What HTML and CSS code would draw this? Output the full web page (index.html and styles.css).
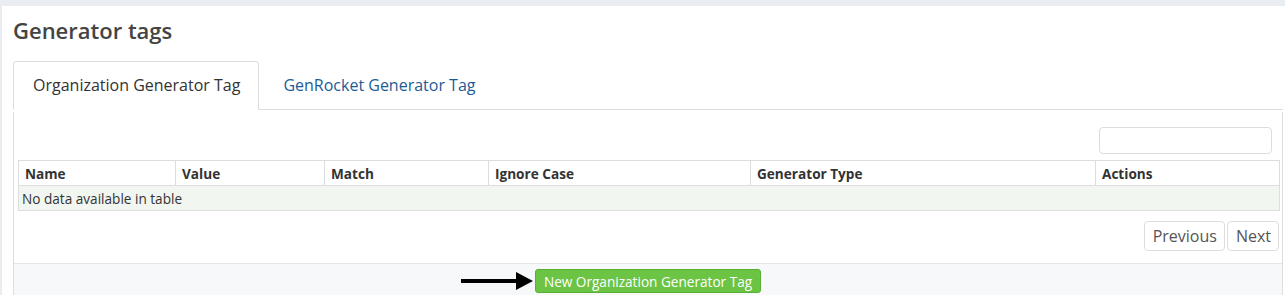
FILE: index.html
```html
<!DOCTYPE html>
<html lang="en">
<head>
    <meta charset="UTF-8">
    <title>Generator tags</title>
    <link rel="stylesheet" href="styles.css">
</head>
<body>

<div class="page">
    <h1 class="page-title">Generator tags</h1>

    <ul class="tabs">
        <li class="tab active">Organization Generator Tag</li>
        <li class="tab"><a href="#">GenRocket Generator Tag</a></li>
    </ul>

    <div class="tab-content">
        <div class="table-body">
            <div class="search-row">
                <input type="text" class="search-field">
            </div>
            <table class="data-table">
                <thead>
                <tr>
                    <th class="col-name">Name</th>
                    <th class="col-value">Value</th>
                    <th class="col-match">Match</th>
                    <th class="col-ignore">Ignore Case</th>
                    <th class="col-type">Generator Type</th>
                    <th>Actions</th>
                </tr>
                </thead>
                <tbody>
                <tr>
                    <td colspan="6">No data available in table</td>
                </tr>
                </tbody>
            </table>
            <div class="pager">
                <button class="pager-button">Previous</button>
                <button class="pager-button">Next</button>
            </div>
        </div>
        <div class="panel-footer">
            <span class="new-wrap">
                <span class="arrow"></span>
                <button class="new-button">New Organization Generator Tag</button>
            </span>
        </div>
    </div>
</div>

</body>
</html>
```

FILE: styles.css
```css
body {
    margin: 0;
    padding: 6px 0 0 2px;
    background: #e9ecf1;
    font-family: "Open Sans", "Liberation Sans", sans-serif;
    color: #333;
    height: 295px;
    box-sizing: border-box;
    overflow: hidden;
}
.page {
    background: #fff;
    padding: 12px 2px 0 11px;
    height: 289px;
    box-sizing: border-box;
}
.page-title {
    margin: 0;
    font-size: 22px;
    font-weight: 600;
    line-height: 24px;
    color: #444;
}
.tabs {
    display: flex;
    list-style: none;
    margin: 19px 0 0 0;
    padding: 0;
    border-bottom: 1px solid #ddd;
}
.tab {
    padding: 0 18px 0 19px;
    height: 47px;
    line-height: 47px;
    font-size: 16px;
    margin-bottom: -1px;
    border: 1px solid transparent;
    border-radius: 4px 4px 0 0;
}
.tab.active {
    background: #fff;
    border-color: #ddd;
    border-bottom-color: #fff;
}
.tab a {
    color: #1d5b96;
    text-decoration: none;
    padding-left: 4px;
}
.tab-content {
    margin-top: 2px;
    border-left: 1px solid #ddd;
    border-right: 1px solid #ddd;
}
.table-body {
    padding: 15px 2px 12px 4px;
}
.search-row {
    display: flex;
    justify-content: flex-end;
    margin-bottom: 6px;
}
.search-field {
    width: 173px;
    height: 27px;
    box-sizing: border-box;
    border: 1px solid #ddd;
    border-radius: 4px;
    margin-right: 8px;
}
.data-table {
    width: 100%;
    border-collapse: collapse;
    font-size: 13.6px;
}
.data-table th, .data-table td {
    border: 1px solid #ddd;
    text-align: left;
    padding: 0 6px;
    height: 25px;
    box-sizing: border-box;
}
.data-table th {
    font-weight: 700;
    color: #333;
}
.data-table td {
    background: #f2f6f1;
    padding-left: 3px;
}
.col-name { width: 157px; }
.col-value { width: 149px; }
.col-match { width: 164px; }
.col-ignore { width: 262px; }
.col-type { width: 345px; }
.pager {
    display: flex;
    justify-content: flex-end;
    gap: 2px;
    margin-top: 10px;
    padding-right: 1px;
}
.pager-button {
    height: 30px;
    padding: 0 7px 0 8px;
    font-family: "Open Sans", "Liberation Sans", sans-serif;
    font-size: 16px;
    color: #555;
    background: #fff;
    border: 1px solid #ddd;
    border-radius: 4px;
}
.panel-footer {
    background: #f7f8fa;
    border-top: 1px solid #e3e5e8;
    padding-top: 5px;
    height: 30px;
    display: flex;
    justify-content: center;
    align-items: flex-start;
}
.new-wrap {
    position: relative;
}
.new-button {
    height: 24px;
    padding: 0 8px;
    font-family: "Open Sans", "Liberation Sans", sans-serif;
    font-size: 13.6px;
    color: #fff;
    background: #6bc444;
    border: 1px solid #57b030;
    border-radius: 3px;
}
.arrow {
    position: absolute;
    left: -74px;
    top: 10px;
    width: 56px;
    height: 4px;
    background: #000;
}
.arrow::after {
    content: "";
    position: absolute;
    right: -16px;
    top: -7px;
    border-left: 17px solid #000;
    border-top: 9px solid transparent;
    border-bottom: 9px solid transparent;
}
```
